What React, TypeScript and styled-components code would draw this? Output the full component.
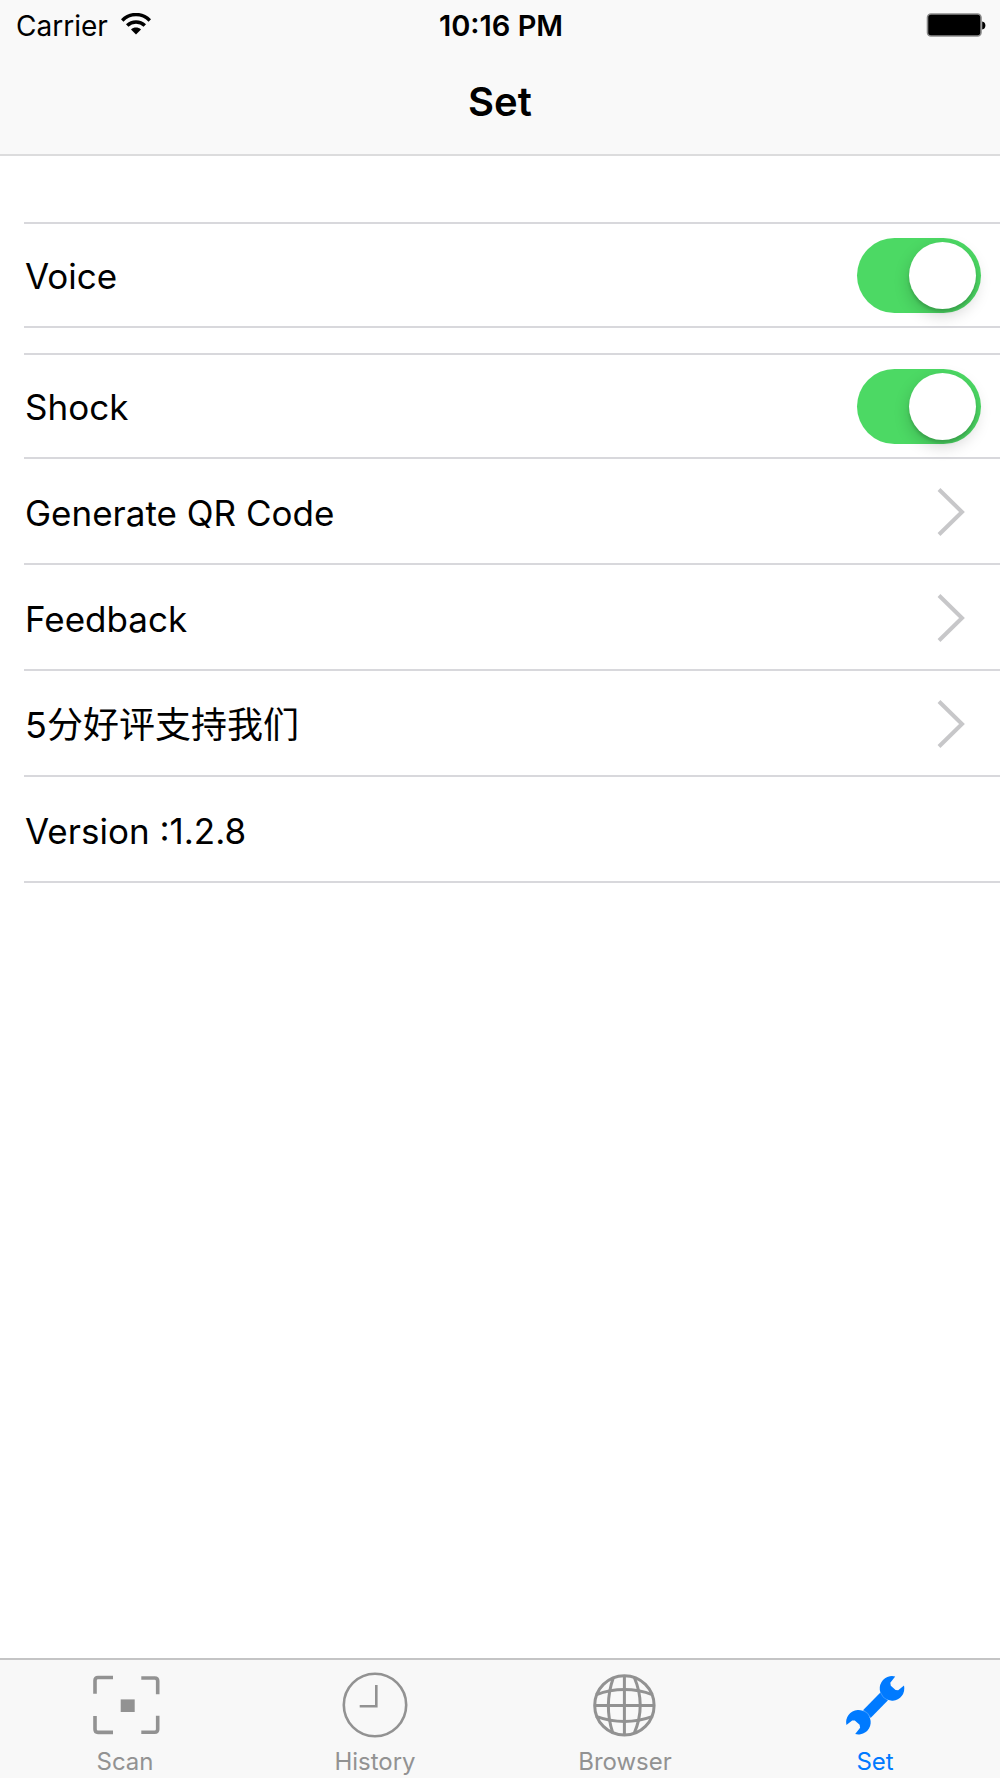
import React, { useState } from "react";
import styled, { createGlobalStyle } from "styled-components";

const GlobalStyle = createGlobalStyle`
  *, *::before, *::after { box-sizing: border-box; }
  body {
    margin: 0;
    background: #ffffff;
    color: #000000;
    font-family: Inter, "Noto Sans CJK SC", sans-serif;
  }
`;

const Screen = styled.div`
  display: flex;
  flex-direction: column;
  min-height: 100vh;
`;

const Header = styled.header`
  background: #f9f9f9;
  border-bottom: 2px solid #dcdcdd;
`;

const StatusBar = styled.div`
  display: grid;
  grid-template-columns: 1fr auto 1fr;
  align-items: center;
  height: 50px;
  padding: 2px 14px 0 16px;
  font-size: 28px;
  line-height: 34px;
`;

const Carrier = styled.div`
  display: flex;
  align-items: center;
  gap: 13px;
`;

const Clock = styled.time`
  font-size: 29px;
  font-weight: 600;
`;

const Battery = styled.svg`
  justify-self: end;
`;

const Title = styled.h1`
  margin: 0;
  font-size: 40px;
  font-weight: 600;
  line-height: 104px;
  text-align: center;
`;

const Content = styled.main`
  display: flex;
  flex: 1;
  flex-direction: column;
  gap: 25px;
  padding: 66px 0 66px 24px;
`;

const Group = styled.ul`
  margin: 0;
  padding: 0;
  list-style: none;
  border-top: 2px solid #d8d8dc;
`;

const Item = styled.li`
  border-bottom: 2px solid #d8d8dc;
`;

const Row = styled.div<{ $inset?: number; $height?: number; $top?: number }>`
  display: flex;
  align-items: center;
  justify-content: space-between;
  width: 100%;
  height: ${(p) => p.$height ?? 104}px;
  padding: ${(p) => p.$top ?? 2}px ${(p) => p.$inset ?? 0}px 0 1px;
  border: 0;
  background: none;
  color: inherit;
  font: inherit;
  font-size: 35px;
  line-height: 44px;
  text-align: left;

  &:lang(zh-CN) {
    font-size: 36px;
  }
`;

const Label = styled.span`
  padding-top: 2px;
`;

const Switch = styled.input`
  appearance: none;
  display: flex;
  align-items: center;
  width: 124px;
  height: 75px;
  margin: 0;
  padding: 4px 5px;
  border-radius: 38px;
  background: ${(p) => (p.checked ? "#4cd964" : "#e5e5ea")};
  justify-content: ${(p) => (p.checked ? "flex-end" : "flex-start")};
  cursor: pointer;

  &::before {
    content: "";
    width: 67px;
    height: 67px;
    border-radius: 50%;
    background: #ffffff;
    box-shadow: 0 6px 16px rgba(0, 0, 0, 0.18), 0 3px 3px rgba(0, 0, 0, 0.14);
  }
`;

const TabBar = styled.nav`
  display: grid;
  grid-template-columns: repeat(4, 1fr);
  background: #f8f8f8;
  border-top: 2px solid #c4c4c5;
`;

const Tab = styled.a<{ $active?: boolean }>`
  display: flex;
  flex-direction: column;
  align-items: center;
  gap: 8px;
  padding: 10px 0 2px;
  color: ${(p) => (p.$active ? "#007aff" : "#929292")};
  font-size: 24px;
  line-height: 28px;
  text-decoration: none;
`;

const WifiIcon = () => (
  <svg width="30" height="26" viewBox="0 0 30 26" aria-hidden="true">
    <g fill="none" stroke="#000" strokeWidth="3.5">
      <path d="M1.2 7.4C9-0.4 21-0.4 28.8 7.4" />
      <path d="M6.2 12.6C11.2 7.8 18.8 7.8 23.8 12.6" />
    </g>
    <path d="M10 16.4C12.8 13.8 17.2 13.8 20 16.4L15 21.4Z" />
  </svg>
);

const Chevron = () => (
  <svg width="28" height="50" viewBox="0 0 28 50" aria-hidden="true">
    <path d="M2 2.5L25 25L2 47.5" fill="none" stroke="#c7c7c9" strokeWidth="4" />
  </svg>
);

const ScanIcon = () => (
  <svg width="70" height="70" viewBox="0 0 70 70" aria-hidden="true">
    <g fill="none" stroke="currentColor" strokeWidth="3.6">
      <path d="M5 23.8V10.5Q5 7.5 8 7.5H23" />
      <path d="M51.3 8H64.7Q67.7 8 67.7 11V24.3" />
      <path d="M5 46V59.3Q5 62.4 8 62.4H23" />
      <path d="M51.3 62.2H64.7Q67.7 62.2 67.7 59.2V45.7" />
    </g>
    <rect x="30.7" y="29.4" width="14" height="12.6" fill="currentColor" />
  </svg>
);

const HistoryIcon = () => (
  <svg width="70" height="70" viewBox="0 0 70 70" aria-hidden="true">
    <g fill="none" stroke="currentColor" strokeWidth="2.6">
      <circle cx="35" cy="35" r="31.2" />
      <path d="M36.3 15V36.3H19.7" />
    </g>
  </svg>
);

const GlobeIcon = () => (
  <svg width="70" height="70" viewBox="0 0 70 70" aria-hidden="true">
    <g fill="none" stroke="currentColor" strokeWidth="3">
      <circle cx="34.4" cy="35.4" r="29.7" />
      <path d="M34.4 5.4V65.4M4.4 35.5H64.4" />
      <path d="M23.4 7.5Q13.6 35.4 22.8 63" />
      <path d="M44.3 7.5Q56.2 35.4 44.3 63" />
      <path d="M6 24.8Q34.4 14.4 62.8 24.8" />
      <path d="M6 46.4Q34.4 56.6 62.8 46.4" />
    </g>
  </svg>
);

const WrenchIcon = () => (
  <svg width="70" height="70" viewBox="0 0 70 70" aria-hidden="true">
    <g fill="currentColor">
      <path d="M55.2 6.5L50.3 12.8L50.8 15.8L55.6 20L58.2 20.2L64 15.6A12.3 12.3 0 1 1 55.2 6.5Z" />
      <path d="M15.2 64.1L20.1 57.8L19.6 54.8L14.8 50.6L12.2 50.4L6.4 55A12.3 12.3 0 1 1 15.2 64.1Z" />
      <path d="M40.4 22.6L48 30.2L30.6 48L23 40.2Z" />
    </g>
    <path
      d="M40.6 22.8Q42.4 28 48 30.4M23 40Q28.4 42.4 30.8 48"
      fill="none"
      stroke="#f8f8f8"
      strokeOpacity="0.3"
      strokeWidth="0.8"
    />
  </svg>
);

const SwitchItem = ({ label }: { label: string }) => {
  const [on, setOn] = useState(true);
  return (
    <Item>
      <Row as="label" $inset={19} $height={102} $top={0}>
        <Label>{label}</Label>
        <Switch type="checkbox" role="switch" checked={on} onChange={() => setOn(!on)} />
      </Row>
    </Item>
  );
};

const LinkItem = ({ label, lang }: { label: string; lang?: string }) => (
  <Item>
    <Row as="button" type="button" $inset={35} lang={lang}>
      <Label>{label}</Label>
      <Chevron />
    </Row>
  </Item>
);

const tabs = [
  { label: "Scan", href: "#scan", Icon: ScanIcon },
  { label: "History", href: "#history", Icon: HistoryIcon },
  { label: "Browser", href: "#browser", Icon: GlobeIcon },
  { label: "Set", href: "#set", Icon: WrenchIcon, active: true },
];

export default function App() {
  return (
    <Screen>
      <GlobalStyle />
      <Header>
        <StatusBar>
          <Carrier>
            Carrier
            <WifiIcon />
          </Carrier>
          <Clock>10:16 PM</Clock>
          <Battery width="60" height="26" viewBox="0 0 60 26" role="img" aria-label="Battery full">
            <rect x="1.5" y="1" width="53.5" height="22" rx="3.5" fill="#000" stroke="#8a8a8a" strokeWidth="1.6" />
            <path d="M56.2 8.4Q59.4 9 59.4 12.4T56.2 16.4Z" />
          </Battery>
        </StatusBar>
        <Title>Set</Title>
      </Header>
      <Content>
        <Group>
          <SwitchItem label="Voice" />
        </Group>
        <Group>
          <SwitchItem label="Shock" />
          <LinkItem label="Generate QR Code" />
          <LinkItem label="Feedback" />
          <LinkItem label="5分好评支持我们" lang="zh-CN" />
          <Item>
            <Row>
              <Label>Version :1.2.8</Label>
            </Row>
          </Item>
        </Group>
      </Content>
      <TabBar>
        {tabs.map(({ label, href, Icon, active }) => (
          <Tab key={label} href={href} $active={active} aria-current={active ? "page" : undefined}>
            <Icon />
            {label}
          </Tab>
        ))}
      </TabBar>
    </Screen>
  );
}
